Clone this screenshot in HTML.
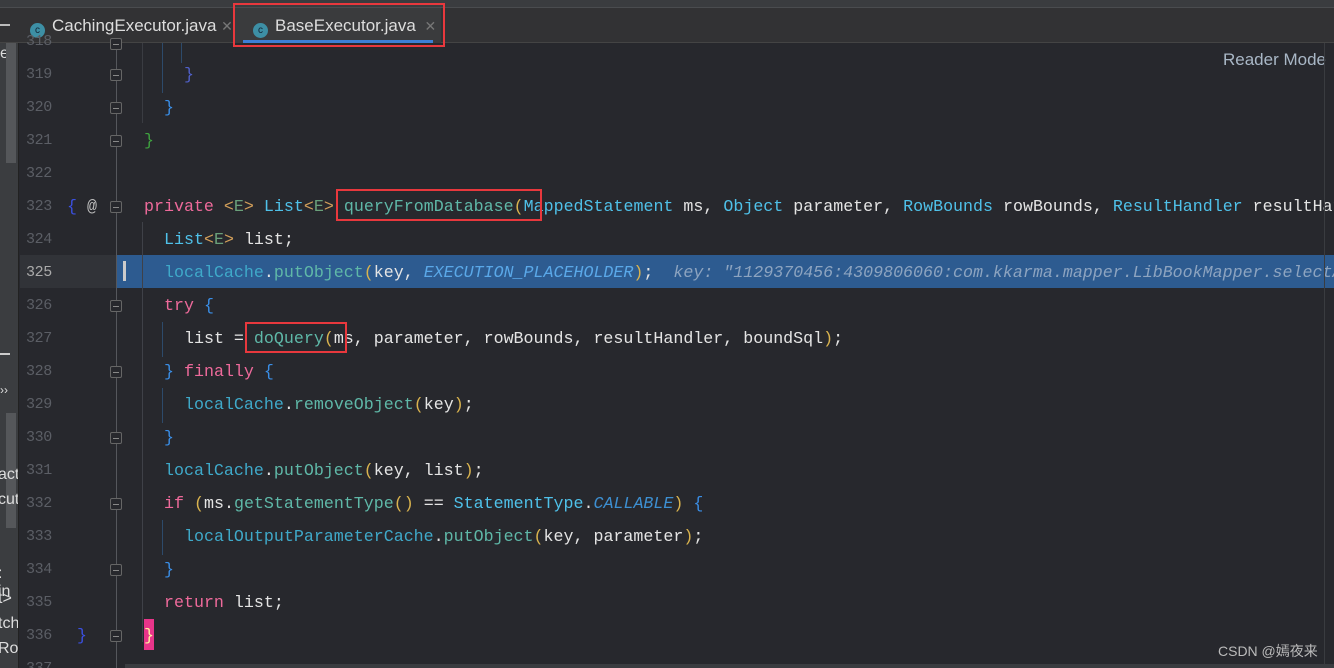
<!DOCTYPE html>
<html><head><meta charset="utf-8"><style>
*{margin:0;padding:0;box-sizing:border-box}
html,body{width:1334px;height:668px;overflow:hidden}
body{background:#27282d;position:relative;font-family:"Liberation Sans",sans-serif}
.top{position:absolute;left:0;top:0;width:1334px;height:8px;background:#3a3c3f;border-bottom:1px solid #4a4c4f}
.tabs{position:absolute;left:0;top:8px;width:1334px;height:35px;background:#323234;border-bottom:1px solid #444}
.tab{position:absolute;top:0;height:35px;font-size:17px;color:#ddd;line-height:35px}
.ic{display:inline-block;width:15px;height:15px;border-radius:50%;background:#3d8fa5;vertical-align:-2px;margin-right:7px;color:#123;font-size:10px;text-align:center;line-height:15px}
.left{position:absolute;left:0;top:43px;width:19px;height:625px;background:#3b3d40;border-right:1px solid #222;overflow:hidden;color:#ddd;font-size:16px}
.ln{position:absolute;left:26px;width:30px;font-family:"Liberation Mono",monospace;font-size:15px;letter-spacing:-0.4px;color:#5b5e65;line-height:33px}
.code{position:absolute;left:0;font-family:"Liberation Mono",monospace;font-size:16.65px;line-height:33px;white-space:pre;color:#e4e4e4}
.k{color:#ee6a9b}.t{color:#4fc1e9}.g{color:#d29f5a}.e{color:#6aa07a}.m{color:#5fb8a8}.f{color:#3fa9c9}.p{color:#d9b34e}.c{color:#3d8fd1;font-style:italic}
.box{position:absolute;border:2px solid #e8383d}
.fold{position:absolute;left:110px;width:12px;height:12px;border:1px solid #666;border-radius:2px;background:#27282d}
.fold:after{content:"";position:absolute;left:2px;top:5px;width:6px;height:1px;background:#888}
.vg{position:absolute;width:1px;background:#3a3c42}
</style></head><body>
<div class="top"></div>
<div class="tabs">
 <div style="position:absolute;left:0;top:16px;width:10px;height:2px;background:#bbb"></div>
 <div class="tab" style="left:30px"><span class="ic">c</span>CachingExecutor.java <span style="color:#777;font-size:14px">✕</span></div>
 <div class="tab" style="left:235px;width:206px;background:#3a3b3d;padding-left:18px"><span class="ic">c</span>BaseExecutor.java <span style="color:#777;font-size:14px;margin-left:4px">✕</span>
 <div style="position:absolute;left:8px;right:8px;bottom:0;height:3px;background:#3c7fd6"></div></div>
</div>
<div class="box" style="left:233px;top:3px;width:212px;height:44px"></div>
<div class="left">
 <div style="position:absolute;top:2px;left:0">e\</div>
 <div style="position:absolute;top:0;left:6px;width:10px;height:120px;background:#55575a"></div>
 <div style="position:absolute;top:310px;left:0;width:10px;height:2px;background:#ccc"></div>
 <div style="position:absolute;top:340px;left:0;font-size:12px">››</div>
 <div style="position:absolute;top:370px;left:6px;width:10px;height:115px;background:#55575a"></div>
 <div style="position:absolute;top:423px;left:-2px">act</div>
 <div style="position:absolute;top:448px;left:-2px">cut</div>
 <div style="position:absolute;top:522px;left:-2px">: in</div>
 <div style="position:absolute;top:547px;left:-2px">t&gt;</div>
 <div style="position:absolute;top:572px;left:-2px">tch</div>
 <div style="position:absolute;top:597px;left:-2px">Row</div>
</div>
<div style="position:absolute;left:20px;top:255px;width:97px;height:33px;background:#313338"></div>
<div style="position:absolute;left:117px;top:255px;width:1217px;height:33px;background:#2d5b90"></div>
<div style="position:absolute;left:123px;top:261px;width:3px;height:20px;background:#ccc"></div>
<div style="position:absolute;left:116px;top:43px;width:1px;height:625px;background:#55575c"></div>
<div class="vg" style="left:142px;top:43px;height:80px"></div>
<div class="vg" style="left:142px;top:222px;height:420px;background:#3f4148"></div>
<div class="vg" style="left:162px;top:322px;height:35px;background:#2d4a6a"></div>
<div class="vg" style="left:162px;top:388px;height:35px;background:#2d4a6a"></div>
<div class="vg" style="left:162px;top:520px;height:35px;background:#2d4a6a"></div>
<div class="vg" style="left:162px;top:43px;height:50px;background:#2d4a6a"></div>
<div class="vg" style="left:181px;top:43px;height:20px;background:#2d4a6a"></div>
<div class="fold" style="top:38px"></div><div class="fold" style="top:69px"></div><div class="fold" style="top:102px"></div><div class="fold" style="top:135px"></div>
<div class="fold" style="top:201px"></div><div class="fold" style="top:300px"></div><div class="fold" style="top:366px"></div><div class="fold" style="top:432px"></div>
<div class="fold" style="top:498px"></div><div class="fold" style="top:564px"></div><div class="fold" style="top:630px"></div>
<div class="ln" style="top:25px">318</div><div class="ln" style="top:58px">319</div><div class="ln" style="top:91px">320</div><div class="ln" style="top:124px">321</div><div class="ln" style="top:157px">322</div><div class="ln" style="top:190px">323</div><div class="ln" style="top:223px">324</div><div class="ln" style="top:256px;color:#aaa">325</div><div class="ln" style="top:289px">326</div><div class="ln" style="top:322px">327</div><div class="ln" style="top:355px">328</div><div class="ln" style="top:388px">329</div><div class="ln" style="top:421px">330</div><div class="ln" style="top:454px">331</div><div class="ln" style="top:487px">332</div><div class="ln" style="top:520px">333</div><div class="ln" style="top:553px">334</div><div class="ln" style="top:586px">335</div><div class="ln" style="top:619px">336</div><div class="ln" style="top:652px">337</div>
<div class="code" style="top:190px;left:67px;color:#3b50e0">{ <span style="color:#bbb">@</span></div>
<div class="code" style="top:619px;left:77px;color:#3b50e0">}</div>
<div class="code" style="top:58px;left:184px;color:#5060c8">}</div>
<div class="code" style="top:91px;left:164px;color:#3a8ee6">}</div>
<div class="code" style="top:124px;left:144px;color:#3fa33f">}</div>
<div class="code" style="top:190px;left:144px"><span class="k">private</span> <span class="g">&lt;</span><span class="e">E</span><span class="g">&gt;</span> <span class="t">List</span><span class="g">&lt;</span><span class="e">E</span><span class="g">&gt;</span> <span class="m">queryFromDatabase</span><span class="p">(</span><span class="t">MappedStatement</span> ms, <span class="t">Object</span> parameter, <span class="t">RowBounds</span> rowBounds, <span class="t">ResultHandler</span> resultHandler</div>
<div class="code" style="top:223px;left:164px"><span class="t">List</span><span class="g">&lt;</span><span class="e">E</span><span class="g">&gt;</span> list;</div>
<div class="code" style="top:256px;left:164px"><span class="f">localCache</span>.<span class="m">putObject</span><span class="p">(</span>key, <span class="c" style="color:#5aa8e8">EXECUTION_PLACEHOLDER</span><span class="p">)</span>;  <span style="color:#8da4c0;font-style:italic">key: "1129370456:4309806060:com.kkarma.mapper.LibBookMapper.selectAll"</span></div>
<div class="code" style="top:289px;left:164px"><span class="k">try</span> <span style="color:#3a8ee6">{</span></div>
<div class="code" style="top:322px;left:184px">list = <span class="m">doQuery</span><span class="p">(</span>ms, parameter, rowBounds, resultHandler, boundSql<span class="p">)</span>;</div>
<div class="code" style="top:355px;left:164px"><span style="color:#3a8ee6">}</span> <span class="k">finally</span> <span style="color:#3a8ee6">{</span></div>
<div class="code" style="top:388px;left:184px"><span class="f">localCache</span>.<span class="m">removeObject</span><span class="p">(</span>key<span class="p">)</span>;</div>
<div class="code" style="top:421px;left:164px;color:#3a8ee6">}</div>
<div class="code" style="top:454px;left:164px"><span class="f">localCache</span>.<span class="m">putObject</span><span class="p">(</span>key, list<span class="p">)</span>;</div>
<div class="code" style="top:487px;left:164px"><span class="k">if</span> <span class="p">(</span>ms.<span class="m">getStatementType</span><span class="p">()</span> == <span class="t">StatementType</span>.<span class="c">CALLABLE</span><span class="p">)</span> <span style="color:#3a8ee6">{</span></div>
<div class="code" style="top:520px;left:184px"><span class="f">localOutputParameterCache</span>.<span class="m">putObject</span><span class="p">(</span>key, parameter<span class="p">)</span>;</div>
<div class="code" style="top:553px;left:164px;color:#3a8ee6">}</div>
<div class="code" style="top:586px;left:164px"><span class="k">return</span> list;</div>
<div style="position:absolute;left:144px;top:619px;width:10px;height:31px;background:#e8358a"></div>
<div class="code" style="top:619px;left:144px;color:#fff0a0">}</div>
<div style="position:absolute;left:125px;top:664px;width:1209px;height:4px;background:#3a3c40"></div>
<div style="position:absolute;left:1223px;top:50px;font-size:17px;color:#a9b7c6">Reader Mode</div>
<div style="position:absolute;left:1324px;top:43px;width:1px;height:625px;background:#3a3c40"></div>
<div class="box" style="left:336px;top:189px;width:206px;height:32px"></div>
<div class="box" style="left:245px;top:322px;width:102px;height:31px"></div>
<div style="position:absolute;left:1218px;top:641px;font-size:14px;color:#bbb;font-family:'Liberation Sans','Noto Sans CJK SC',sans-serif">CSDN @嫣夜来</div>
</body></html>
